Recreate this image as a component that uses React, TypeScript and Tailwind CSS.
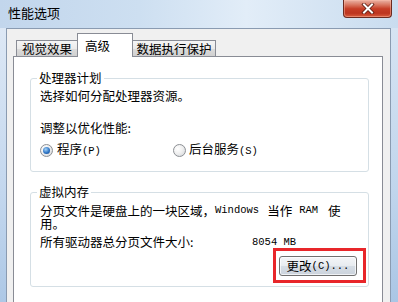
import React from "react";

function A({ children, className = "" }: { children: React.ReactNode; className?: string }) {
  return <span className={"font-['Liberation_Mono',monospace] text-[10.5px] " + className}>{children}</span>;
}

function Radio({ checked }: { checked?: boolean }) {
  return (
    <span className="w-[13px] h-[13px] shrink-0 rounded-full border border-[#8c8f94] bg-[radial-gradient(circle_at_35%_35%,#ffffff_0%,#f0f0f0_45%,#cfd3d8_100%)] flex items-center justify-center">
      {checked && (
        <span className="w-[7px] h-[7px] rounded-full bg-[radial-gradient(circle_at_40%_35%,#a6d3f7_0%,#2f76c6_55%,#0e3f82_100%)]" />
      )}
    </span>
  );
}

export default function App() {
  return (
    <div className="w-[398px] h-[302px] overflow-hidden flex flex-col bg-[#c9dbee] font-['Noto_Sans_CJK_SC',sans-serif] text-black">
      {/* title bar */}
      <div className="h-[28px] shrink-0 flex items-start bg-[linear-gradient(90deg,#c2d6ec_0%,#cddff1_35%,#e2edf8_62%,#c9dcef_100%)]">
        <div className="pl-[8px] pt-[5px] text-[13px] leading-[16px]">性能选项</div>
        <div className="flex-1" />
        <div className="mr-[6px] w-[49px] h-[18px] rounded-b-[4px] border border-t-0 border-[#6b2a20] bg-[linear-gradient(180deg,#eab4a6_0%,#d8745e_30%,#c63d26_52%,#bd3520_78%,#d95d3e_100%)] shadow-[inset_0_0_0_1px_rgba(255,190,170,0.45)] flex items-center justify-center">
          <svg width="14" height="11" viewBox="0 0 14 11">
            <path d="M3 1.5 L11 9.5 M11 1.5 L3 9.5" stroke="#5a1a10" strokeWidth="3.6" strokeLinecap="square" fill="none" />
            <path d="M3 1.5 L11 9.5 M11 1.5 L3 9.5" stroke="#ffffff" strokeWidth="2" strokeLinecap="square" fill="none" />
          </svg>
        </div>
      </div>

      {/* body */}
      <div className="flex-1 flex">
        <div className="w-[6px] bg-[linear-gradient(180deg,#dde8f5_0%,#c3d7ee_60%,#adc8e6_100%)]" />
        <div className="w-[385px] flex flex-col border-l border-r border-t border-[#8a9bb1] bg-[#f0f0f0] pl-[6px] pr-[7px] pt-[4px]">
          {/* tabs */}
          <div className="h-[23px] shrink-0 flex items-end text-[12.5px] leading-[14px]">
            <div className="ml-[3px] w-[62px] h-[16px] border-t border-l border-r border-[#898c95] bg-[linear-gradient(180deg,#f5f5f5_0%,#ebebeb_50%,#dcdcdc_51%,#d0d0d0_100%)] flex items-center justify-center">
              视觉效果
            </div>
            <div className="relative z-10 -ml-[1px] -mb-[1px] w-[56px] h-[24px] border-t border-l border-r border-[#898c95] bg-white pl-[7px] pt-[5px]">
              高级
            </div>
            <div className="-ml-[1px] w-[84px] h-[16px] border-t border-l border-r border-[#898c95] bg-[linear-gradient(180deg,#f5f5f5_0%,#ebebeb_50%,#dcdcdc_51%,#d0d0d0_100%)] flex items-center justify-center">
              数据执行保护
            </div>
          </div>

          {/* panel */}
          <div className="flex-1 bg-white border-t border-l border-r border-[#898c95] pl-[16px] pr-[13px] pt-[14px] flex flex-col text-[12.5px] leading-[14px]">
            <fieldset className="border border-[#d5dfe5] rounded-[3px] p-0 m-0">
              <legend className="ml-[6px] px-[2px] leading-[14px]">处理器计划</legend>
              <div className="pl-[9px] pb-[14px]">
                <div className="mt-[4px]">选择如何分配处理器资源。</div>
                <div className="mt-[18px]">调整以优化性能:</div>
                <div className="mt-[8px] h-[14px] flex items-center">
                  <div className="w-[133px] flex items-center gap-[4px]">
                    <Radio checked />
                    <span>
                      程序<A>(P)</A>
                    </span>
                  </div>
                  <div className="flex items-center gap-[3px]">
                    <Radio />
                    <span>
                      后台服务<A>(S)</A>
                    </span>
                  </div>
                </div>
              </div>
            </fieldset>

            <fieldset className="mt-[13px] border border-[#d5dfe5] rounded-[3px] p-0 m-0">
              <legend className="ml-[6px] px-[2px] leading-[14px]">虚拟内存</legend>
              <div className="pl-[9px] pr-[2px] pb-[3px]">
                <div className="mt-[5px] leading-[13px]">
                  <div className="flex whitespace-nowrap">
                    <span>分页文件是硬盘上的一块区域，</span>
                    <A>Windows</A>
                    <span className="ml-[8px]">当作</span>
                    <A className="ml-[7px]">RAM</A>
                    <span className="ml-[10px]">使</span>
                  </div>
                  <div>用。</div>
                </div>
                <div className="mt-[5px] flex">
                  <div className="w-[212px]">所有驱动器总分页文件大小:</div>
                  <A>8054 MB</A>
                </div>
                <div className="-mt-[1px] flex justify-end">
                  <div className="border-[3px] border-[#e8262a] pl-[3px] pr-[6px] pt-[5px] pb-[4px]">
                    <div className="w-[78px] h-[20px] border border-[#707070] rounded-[3px] bg-[linear-gradient(180deg,#f4f6f8_0%,#e8ecf0_48%,#d6dde5_52%,#cbd3dc_100%)] shadow-[inset_0_0_0_1px_rgba(255,255,255,0.7)] flex items-center justify-center leading-[14px]">
                      更改<A>(C)...</A>
                    </div>
                  </div>
                </div>
              </div>
            </fieldset>
          </div>
        </div>
        <div className="flex-1 bg-[linear-gradient(180deg,#d6e4f3_0%,#c0d5ec_60%,#aac6e5_100%)]" />
      </div>
    </div>
  );
}
